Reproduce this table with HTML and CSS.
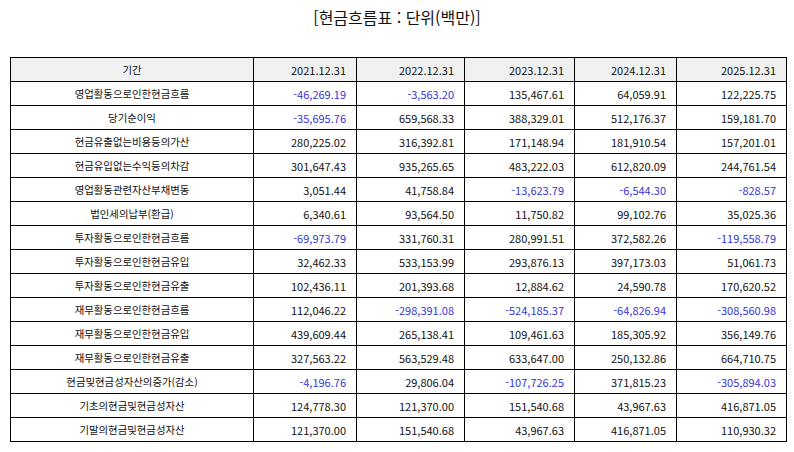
FILE: index.html
```html
<!DOCTYPE html>
<html lang="ko">
<head>
<meta charset="utf-8">
<link rel="stylesheet" href="styles.css">
</head>
<body>
<h1 class="title">[현금흐름표 : 단위(백만)]</h1>
<table class="cf">
<colgroup>
<col class="c-label"><col class="c1"><col class="c2"><col class="c3"><col class="c4"><col class="c5">
</colgroup>
<thead>
<tr><th class="label">기간</th><th>2021.12.31</th><th>2022.12.31</th><th>2023.12.31</th><th>2024.12.31</th><th>2025.12.31</th></tr>
</thead>
<tbody>
<tr><td class="label">영업활동으로인한현금흐름</td><td class="neg">-46,269.19</td><td class="neg">-3,563.20</td><td>135,467.61</td><td>64,059.91</td><td>122,225.75</td></tr>
<tr><td class="label">당기순이익</td><td class="neg">-35,695.76</td><td>659,568.33</td><td>388,329.01</td><td>512,176.37</td><td>159,181.70</td></tr>
<tr><td class="label">현금유출없는비용등의가산</td><td>280,225.02</td><td>316,392.81</td><td>171,148.94</td><td>181,910.54</td><td>157,201.01</td></tr>
<tr><td class="label">현금유입없는수익등의차감</td><td>301,647.43</td><td>935,265.65</td><td>483,222.03</td><td>612,820.09</td><td>244,761.54</td></tr>
<tr><td class="label">영업활동관련자산부채변동</td><td>3,051.44</td><td>41,758.84</td><td class="neg">-13,623.79</td><td class="neg">-6,544.30</td><td class="neg">-828.57</td></tr>
<tr><td class="label">법인세의납부(환급)</td><td>6,340.61</td><td>93,564.50</td><td>11,750.82</td><td>99,102.76</td><td>35,025.36</td></tr>
<tr><td class="label">투자활동으로인한현금흐름</td><td class="neg">-69,973.79</td><td>331,760.31</td><td>280,991.51</td><td>372,582.26</td><td class="neg">-119,558.79</td></tr>
<tr><td class="label">투자활동으로인한현금유입</td><td>32,462.33</td><td>533,153.99</td><td>293,876.13</td><td>397,173.03</td><td>51,061.73</td></tr>
<tr><td class="label">투자활동으로인한현금유출</td><td>102,436.11</td><td>201,393.68</td><td>12,884.62</td><td>24,590.78</td><td>170,620.52</td></tr>
<tr><td class="label">재무활동으로인한현금흐름</td><td>112,046.22</td><td class="neg">-298,391.08</td><td class="neg">-524,185.37</td><td class="neg">-64,826.94</td><td class="neg">-308,560.98</td></tr>
<tr><td class="label">재무활동으로인한현금유입</td><td>439,609.44</td><td>265,138.41</td><td>109,461.63</td><td>185,305.92</td><td>356,149.76</td></tr>
<tr><td class="label">재무활동으로인한현금유출</td><td>327,563.22</td><td>563,529.48</td><td>633,647.00</td><td>250,132.86</td><td>664,710.75</td></tr>
<tr><td class="label">현금및현금성자산의증가(감소)</td><td class="neg">-4,196.76</td><td>29,806.04</td><td class="neg">-107,726.25</td><td>371,815.23</td><td class="neg">-305,894.03</td></tr>
<tr><td class="label">기초의현금및현금성자산</td><td>124,778.30</td><td>121,370.00</td><td>151,540.68</td><td>43,967.63</td><td>416,871.05</td></tr>
<tr><td class="label">기말의현금및현금성자산</td><td>121,370.00</td><td>151,540.68</td><td>43,967.63</td><td>416,871.05</td><td>110,930.32</td></tr>
</tbody>
</table>
</body>
</html>
```

FILE: styles.css
```css
html, body {
  margin: 0;
  padding: 0;
  background: #ffffff;
}
body {
  font-family: "Noto Sans CJK KR", "Noto Sans", sans-serif;
  color: #111;
}
.title {
  margin: 0;
  padding-top: 5px;
  height: 57px;
  box-sizing: border-box;
  text-align: center;
  font-size: 16px;
  font-weight: 400;
  line-height: 24px;
  color: #111;
}
.cf {
  margin-left: 10px;
  width: 776px;
  border-collapse: collapse;
  table-layout: fixed;
  font-size: 11px;
}
.c-label { width: 243px; }
.c1 { width: 103px; }
.c2 { width: 108px; }
.c3 { width: 110px; }
.c4 { width: 102px; }
.c5 { width: 110px; }
.cf th, .cf td {
  border: 1px solid #000;
  height: 23px;
  padding: 0 10px 0 0;
  text-align: right;
  font-weight: 400;
  line-height: 14px;
  white-space: nowrap;
  color: #111;
}
.cf th {
  background: #f0f0f0;
}
.cf .label {
  text-align: center;
  padding: 0;
  font-size: 10.4px;
}
.cf .neg {
  color: #3535d4;
}
```
